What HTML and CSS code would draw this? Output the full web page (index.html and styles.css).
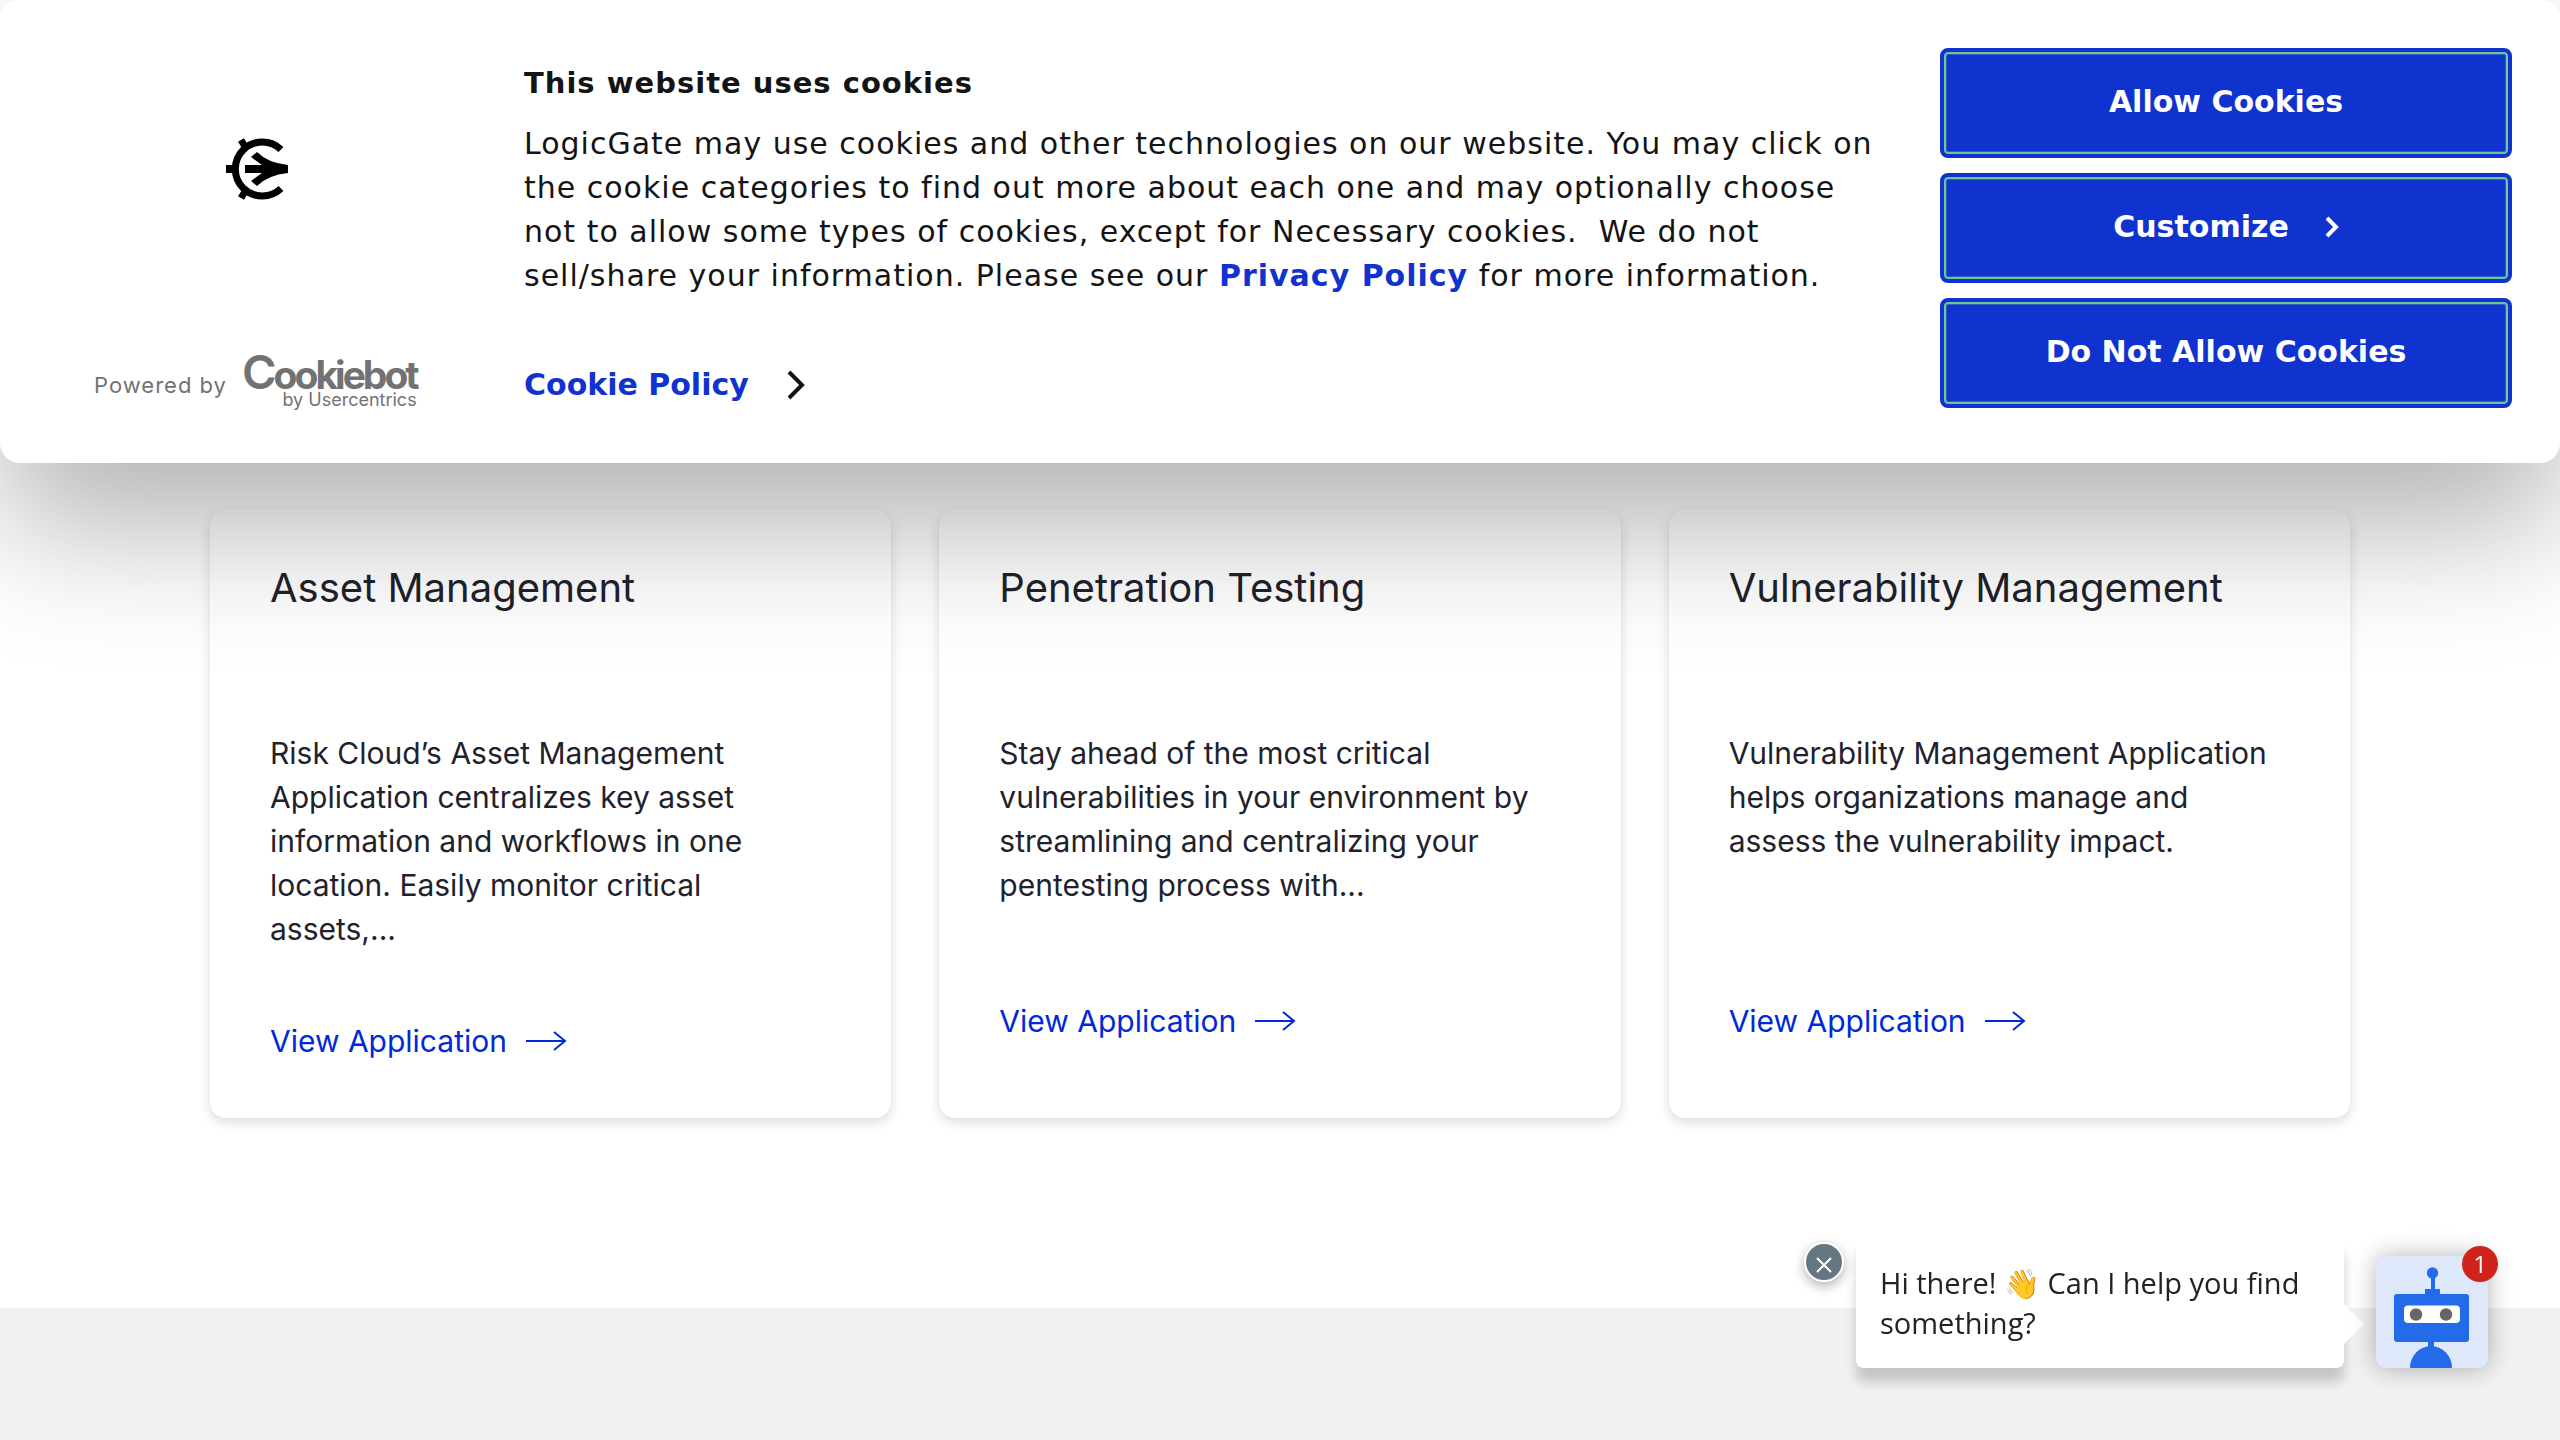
FILE: index.html
```html
<!DOCTYPE html>
<html lang="en">
<head>
<meta charset="utf-8">
<title>LogicGate Applications</title>
<link rel="stylesheet" href="styles.css">
</head>
<body>
<section class="cookie" role="dialog" aria-labelledby="cookie-title">
  <div class="cookie-brand">
    <svg class="gate" viewBox="0 0 64 66" aria-hidden="true">
      <path d="M55 13.500A27 27 0 1 0 55 52.500M15 4l5 8M15 62l5-8" fill="none" stroke="#000" stroke-width="7"/>
      <path d="M0 29H10V37H0Z"/>
      <path d="M31 16Q42 27 62 29V37Q42 39 31 50L25 45 36 37H19V29H36L25 21Z"/>
    </svg>
    <div class="powered">
      <span class="powered-by">Powered by</span>
      <a class="cookiebot" href="#"><span class="cb-name"><span class="cb-c">C</span>ookiebot</span><span class="cb-sub">by Usercentrics</span></a>
    </div>
  </div>
  <div class="cookie-text">
    <h2 id="cookie-title">This website uses cookies</h2>
    <p>LogicGate may use cookies and other technologies on our website. You may click on the cookie categories to find out more about each one and may optionally choose not to allow some types of cookies, except for Necessary cookies.&nbsp; We do not sell/share your information. Please see our <a href="#">Privacy Policy</a> for more information.</p>
    <a class="policy" href="#">Cookie Policy
      <svg viewBox="0 0 20 30" aria-hidden="true"><path d="M2 2l13 13L2 28" fill="none" stroke="#141414" stroke-width="4"/></svg>
    </a>
  </div>
  <div class="cookie-actions">
    <button type="button">Allow Cookies</button>
    <button type="button">Customize
      <svg viewBox="0 0 14 22" aria-hidden="true"><path d="M2 2l9 9-9 9" fill="none" stroke="#fff" stroke-width="4"/></svg>
    </button>
    <button type="button">Do Not Allow Cookies</button>
  </div>
</section>

<main class="apps">
  <article class="card">
    <h3>Asset Management</h3>
    <p>Risk Cloud’s Asset Management Application centralizes key asset information and workflows in one location. Easily monitor critical assets,...</p>
    <a href="#">View Application <svg viewBox="0 0 42 22" aria-hidden="true"><path d="M1 11H40M29 2l11 9-11 9"/></svg></a>
  </article>
  <article class="card">
    <h3>Penetration Testing</h3>
    <p>Stay ahead of the most critical vulnerabilities in your environment by streamlining and centralizing your pentesting process with...</p>
    <a href="#">View Application <svg viewBox="0 0 42 22" aria-hidden="true"><path d="M1 11H40M29 2l11 9-11 9"/></svg></a>
  </article>
  <article class="card">
    <h3>Vulnerability Management</h3>
    <p>Vulnerability Management Application helps organizations manage and assess the vulnerability impact.</p>
    <a href="#">View Application <svg viewBox="0 0 42 22" aria-hidden="true"><path d="M1 11H40M29 2l11 9-11 9"/></svg></a>
  </article>
</main>
<footer class="band"></footer>

<aside class="chat">
  <button class="chat-close" type="button" aria-label="Close">
    <svg viewBox="0 0 16 16" aria-hidden="true"><path d="M1 1l14 14M15 1L1 15" stroke="#fff" stroke-width="2"/></svg>
  </button>
  <div class="bubble">Hi there! 👋 Can I help you find something?</div>
  <button class="bot" type="button" aria-label="Open chat">
    <svg viewBox="0 0 112 112" aria-hidden="true">
      <g fill="#246bea">
        <circle cx="56.500" cy="17" r="5.700"/>
        <path d="M55 20h4v13h5v6H49v-6h6Z"/>
        <rect x="18" y="38" width="75" height="48" rx="3"/>
        <rect x="52" y="84" width="6" height="8"/>
        <path d="M34 112a21 22 0 0 1 42 0Z"/>
      </g>
      <rect x="28" y="49.500" width="56" height="17.500" rx="4" fill="#fff"/>
      <circle cx="40" cy="58.500" r="6.200" fill="#666"/>
      <circle cx="70" cy="58.500" r="6.200" fill="#666"/>
    </svg>
    <span class="badge">1</span>
  </button>
</aside>
</body>
</html>
```
FILE: styles.css
```css
* { box-sizing: border-box; }
html, body { margin: 0; }
body {
  min-height: 100vh;
  display: flex;
  flex-direction: column;
  background: #fff;
  color: #1f222c;
  font: 400 30px/44px Inter, sans-serif;
}
a { text-decoration: none; }
button { border: 0; padding: 0; cursor: pointer; }

.cookie {
  position: relative;
  z-index: 2;
  display: grid;
  grid-template-columns: 384px 1fr 572px;
  column-gap: 48px;
  padding: 48px 48px 55px 92px;
  border-radius: 20px;
  background: #fff;
  box-shadow: 0 64px 136px rgba(0, 0, 0, .3);
  color: #141414;
  font-family: "DejaVu Sans", sans-serif;
}
.cookie-brand {
  display: flex;
  flex-direction: column;
  justify-content: space-between;
  padding-top: 88px;
}
.gate { width: 64px; height: 66px; margin-left: 134px; }
.powered {
  display: flex;
  gap: 15px;
  padding-left: 2px;
  color: #727272;
  font: 400 22px/24px Inter, sans-serif;
  white-space: nowrap;
}
.powered-by { padding-top: 18px; letter-spacing: 1px; }
.cookiebot { display: flex; flex-direction: column; align-items: flex-end; color: inherit; }
.cb-name { font-size: 39px; font-weight: 700; line-height: 34px; letter-spacing: -3px; }
.cb-c { font-size: 47px; font-weight: 600; }
.cb-sub { font-size: 18px; line-height: 16px; }
.cookie-text { padding-top: 13px; }
.cookie-text h2 { margin: 0 0 17px; font-size: 29px; line-height: 44px; letter-spacing: 1px; }
.cookie-text p { margin: 0; letter-spacing: 1px; }
.cookie-text a { color: #1032cf; font-weight: 700; }
.policy { display: inline-flex; align-items: center; gap: 38px; margin-top: 65px; }
.policy svg { width: 20px; height: 30px; }
.cookie-actions { display: grid; gap: 15px; align-content: start; }
.cookie-actions button {
  display: flex;
  align-items: center;
  justify-content: center;
  gap: 36px;
  height: 110px;
  padding-bottom: 2px;
  border-radius: 8px;
  border: 4px solid #1032cf;
  background: #1032cf;
  box-shadow: inset 0 0 0 2px #6cc795, inset 0 0 0 3px #2a5fc0;
  color: #fff;
  font: 700 30px/44px "DejaVu Sans", sans-serif;
}
.cookie-actions svg { width: 14px; height: 22px; }

.apps {
  display: grid;
  grid-template-columns: repeat(3, 1fr);
  gap: 48px;
  padding: 47px 210px 190px;
}
.card {
  padding: 52px 60px 55px;
  border-radius: 16px;
  background: #fff;
  box-shadow: 0 4px 12px rgba(0, 0, 0, .15);
}
.card h3 { margin: 0 0 117px; font-size: 40px; font-weight: 400; line-height: 52px; }
.card p { margin: 0 0 68px; min-height: 200px; }
.card a { display: inline-flex; align-items: center; gap: 18px; color: #0029d9; }
.card svg { width: 42px; height: 22px; fill: none; stroke: #0029d9; stroke-width: 2; }
.band { flex: 1; background: #f1f1f1; }

.chat {
  position: fixed;
  right: 72px;
  bottom: 72px;
  display: flex;
  align-items: flex-start;
  font: 400 29px/40px "Open Sans", sans-serif;
}
.chat-close {
  width: 40px;
  height: 40px;
  margin: 4px 12px 0 0;
  border: 2px solid #fff;
  border-radius: 50%;
  background: #657783;
  box-shadow: 0 4px 12px rgba(0, 0, 0, .3);
}
.chat-close svg { width: 16px; height: 16px; margin-top: 8px; }
.bubble {
  position: relative;
  width: 488px;
  padding: 25px 24px;
  border-radius: 8px;
  background: #fff;
  box-shadow: 0 14px 12px rgba(0, 0, 0, .18);
  color: #222;
}
.bubble::after {
  content: "";
  position: absolute;
  left: 100%;
  bottom: 24px;
  border: 20px solid transparent;
  border-right: 0;
  border-left-color: #fff;
}
.bot {
  position: relative;
  align-self: flex-end;
  width: 112px;
  height: 112px;
  margin-left: 32px;
  border-radius: 10px;
  background: #dde8fb;
  box-shadow: 0 0 24px rgba(0, 0, 0, .3);
}
.bot svg { display: block; width: 112px; height: 112px; }
.badge {
  position: absolute;
  top: -10px;
  right: -10px;
  width: 36px;
  height: 36px;
  border-radius: 50%;
  background: #d0231c;
  color: #fff;
  font: 400 24px/36px "Open Sans", sans-serif;
}
```
